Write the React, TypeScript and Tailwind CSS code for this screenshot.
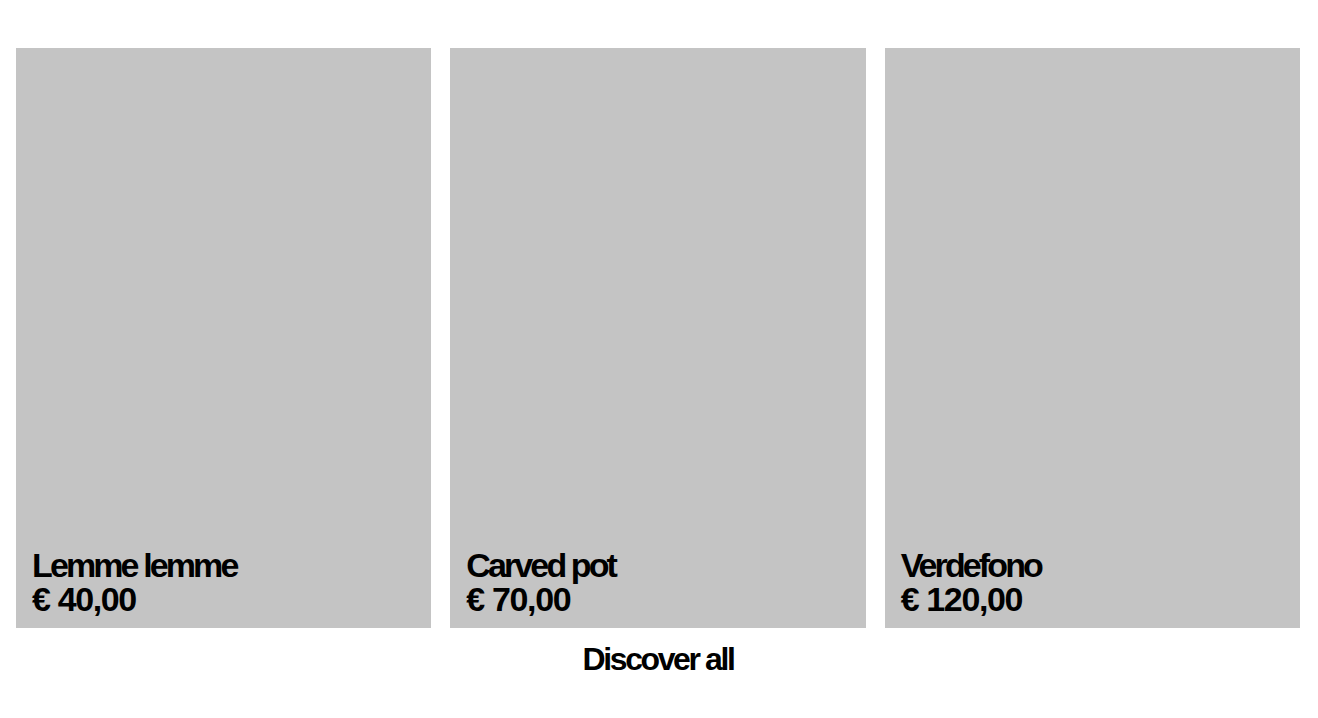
import React from "react";

const products = [
  { name: "Lemme lemme", price: "€ 40,00" },
  { name: "Carved pot", price: "€ 70,00" },
  { name: "Verdefono", price: "€ 120,00" },
];

export default function App() {
  return (
    <div
      className="min-h-[718px] w-full bg-white text-black"
      style={{ fontFamily: '"Liberation Sans", Arial, sans-serif' }}
    >
      <div className="flex w-[1300px] flex-col pl-4 pt-12">
        <div className="flex gap-[19px]">
          {products.map((p) => (
            <div
              key={p.name}
              className="flex h-[580px] w-[416px] flex-col justify-end bg-[#c4c4c4] px-4 pb-3"
            >
              <div className="text-[34px] font-bold leading-[34px]">
                <div className="tracking-[-0.085em]">{p.name}</div>
                <div className="tracking-[-0.04em]">{p.price}</div>
              </div>
            </div>
          ))}
        </div>
        <div className="mt-[15px] text-center text-[32px] font-bold leading-[32px] tracking-[-0.075em]">
          Discover all
        </div>
      </div>
    </div>
  );
}
